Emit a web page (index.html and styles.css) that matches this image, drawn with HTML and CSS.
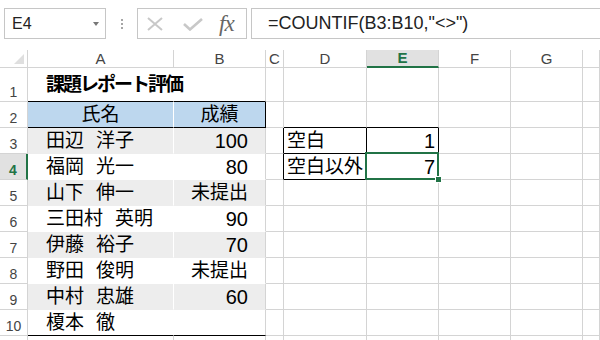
FILE: index.html
```html
<!DOCTYPE html>
<html lang="ja">
<head>
    <meta charset="UTF-8">
    <meta name="viewport" content="width=device-width, initial-scale=1.0">
    <title>課題レポート評価</title>
    <link rel="stylesheet" href="styles.css">
</head>
<body>
    <div class="formula-bar">
        <div class="name-box"><span>E4</span><span class="arrow"></span></div>
        <div class="grip"><i></i><i></i><i></i></div>
        <div class="fx-box">
            <svg class="cancel" width="16" height="14" viewBox="0 0 16 14"><path d="M1 1 L15 13 M15 1 L1 13" stroke="#c8c8c8" stroke-width="2" fill="none"/></svg>
            <svg class="enter" width="20" height="13" viewBox="0 0 20 13"><path d="M1 6 L7 11.5 L19 1" stroke="#c8c8c8" stroke-width="2.6" fill="none"/></svg>
            <span class="fx"><i>f</i><i>x</i></span>
        </div>
        <div class="formula">=COUNTIF(B3:B10,"&lt;&gt;")</div>
    </div>

    <div class="sheet">
        <div class="row head">
            <div class="corner"><svg width="10" height="10" viewBox="0 0 10 10"><path d="M10 0 L10 10 L0 10 Z" fill="#dfdfdf"/></svg></div>
            <div class="ch">A</div>
            <div class="ch">B</div>
            <div class="ch">C</div>
            <div class="ch">D</div>
            <div class="ch active">E</div>
            <div class="ch">F</div>
            <div class="ch">G</div>
            <div class="ch"></div>
        </div>

        <div class="row r1">
            <div class="rh">1</div>
            <div class="cell jp title no-right line-bottom">課題レポート評価</div>
            <div class="cell line-bottom"></div>
            <div class="cell"></div>
            <div class="cell"></div>
            <div class="cell"></div>
            <div class="cell"></div>
            <div class="cell"></div>
            <div class="cell"></div>
        </div>

        <div class="row">
            <div class="rh">2</div>
            <div class="cell jp hdr center white-right line-bottom">氏名</div>
            <div class="cell jp hdr center line-right line-bottom">成績</div>
            <div class="cell"></div>
            <div class="cell line-bottom"></div>
            <div class="cell line-bottom"></div>
            <div class="cell"></div>
            <div class="cell"></div>
            <div class="cell"></div>
        </div>

        <div class="row">
            <div class="rh">3</div>
            <div class="cell jp name gray">田辺<span class="gap">　</span>洋子</div>
            <div class="cell num score gray">100</div>
            <div class="cell line-right"></div>
            <div class="cell jp label line-right line-bottom">空白</div>
            <div class="cell num count line-right line-bottom">1</div>
            <div class="cell"></div>
            <div class="cell"></div>
            <div class="cell"></div>
        </div>

        <div class="row">
            <div class="rh active">4</div>
            <div class="cell jp name white">福岡<span class="gap">　</span>光一</div>
            <div class="cell num score white">80</div>
            <div class="cell line-right"></div>
            <div class="cell jp label line-right line-bottom">空白以外</div>
            <div class="cell num count line-right line-bottom selected">7</div>
            <div class="cell"></div>
            <div class="cell"></div>
            <div class="cell"></div>
        </div>

        <div class="row">
            <div class="rh">5</div>
            <div class="cell jp name gray">山下<span class="gap">　</span>伸一</div>
            <div class="cell jp score gray">未提出</div>
            <div class="cell"></div>
            <div class="cell"></div>
            <div class="cell"></div>
            <div class="cell"></div>
            <div class="cell"></div>
            <div class="cell"></div>
        </div>

        <div class="row">
            <div class="rh">6</div>
            <div class="cell jp name white">三田村<span class="gap">　</span>英明</div>
            <div class="cell num score white">90</div>
            <div class="cell"></div>
            <div class="cell"></div>
            <div class="cell"></div>
            <div class="cell"></div>
            <div class="cell"></div>
            <div class="cell"></div>
        </div>

        <div class="row">
            <div class="rh">7</div>
            <div class="cell jp name gray">伊藤<span class="gap">　</span>裕子</div>
            <div class="cell num score gray">70</div>
            <div class="cell"></div>
            <div class="cell"></div>
            <div class="cell"></div>
            <div class="cell"></div>
            <div class="cell"></div>
            <div class="cell"></div>
        </div>

        <div class="row">
            <div class="rh">8</div>
            <div class="cell jp name white">野田<span class="gap">　</span>俊明</div>
            <div class="cell jp score white">未提出</div>
            <div class="cell"></div>
            <div class="cell"></div>
            <div class="cell"></div>
            <div class="cell"></div>
            <div class="cell"></div>
            <div class="cell"></div>
        </div>

        <div class="row">
            <div class="rh">9</div>
            <div class="cell jp name gray">中村<span class="gap">　</span>忠雄</div>
            <div class="cell num score gray">60</div>
            <div class="cell"></div>
            <div class="cell"></div>
            <div class="cell"></div>
            <div class="cell"></div>
            <div class="cell"></div>
            <div class="cell"></div>
        </div>

        <div class="row">
            <div class="rh">10</div>
            <div class="cell jp name white line-bottom">榎本<span class="gap">　</span>徹</div>
            <div class="cell score white line-bottom"></div>
            <div class="cell"></div>
            <div class="cell"></div>
            <div class="cell"></div>
            <div class="cell"></div>
            <div class="cell"></div>
            <div class="cell"></div>
        </div>

        <div class="row">
            <div class="rh"></div>
            <div class="cell"></div>
            <div class="cell"></div>
            <div class="cell"></div>
            <div class="cell"></div>
            <div class="cell"></div>
            <div class="cell"></div>
            <div class="cell"></div>
            <div class="cell"></div>
        </div>
    </div>
</body>
</html>
```

FILE: styles.css
```css
html, body {
    height: 340px;
    overflow: hidden;
}
body {
    margin: 0;
    background: #fff;
    color: #000;
    font-family: "Liberation Sans", Arial, sans-serif;
}

/* formula bar */
.formula-bar {
    display: flex;
    align-items: flex-start;
    height: 50px;
    padding-top: 8px;
    box-sizing: border-box;
}
.name-box {
    display: flex;
    align-items: center;
    justify-content: space-between;
    width: 102px;
    height: 31px;
    margin-left: 4px;
    padding: 0 6px 0 7px;
    border: 1px solid #c6c6c6;
    box-sizing: border-box;
    font-size: 16px;
    line-height: 18px;
    color: #222;
}
.arrow {
    width: 0;
    height: 0;
    border-left: 3.5px solid transparent;
    border-right: 3.5px solid transparent;
    border-top: 4px solid #777;
}
.grip {
    display: flex;
    flex-direction: column;
    align-items: center;
    gap: 2px;
    width: 31px;
    padding-top: 11px;
}
.grip i {
    width: 2px;
    height: 2px;
    background: #a6a6a6;
}
.fx-box {
    display: flex;
    align-items: center;
    width: 110px;
    height: 31px;
    border: 1px solid #c6c6c6;
    box-sizing: border-box;
}
.cancel {
    margin-left: 9px;
}
.enter {
    margin-left: 20px;
    margin-top: 2px;
}
.fx {
    margin-left: 16px;
    font-family: "Liberation Serif", "Times New Roman", serif;
    font-size: 23px;
    color: #666;
    line-height: 22px;
}
.fx i {
    letter-spacing: -1px;
}
.formula {
    flex: 1;
    height: 31px;
    margin-left: 4px;
    padding-left: 16px;
    border: 1px solid #c6c6c6;
    border-right: none;
    box-sizing: border-box;
    font-size: 18px;
    line-height: 29px;
    color: #222;
    white-space: nowrap;
}

/* sheet grid */
.row {
    display: grid;
    grid-template-columns: 28px 146px 92px 18px 83px 72px 72px 72px 17px;
    height: 26px;
}
.row.head {
    height: 18px;
}
.row.r1 {
    height: 34px;
}
.row > div {
    display: flex;
    align-items: flex-end;
    box-sizing: border-box;
    border-right: 1px solid #d4d4d4;
    border-bottom: 1px solid #d4d4d4;
    white-space: nowrap;
    min-width: 0;
}
.corner {
    justify-content: flex-end;
    padding: 0 3px 3px 0;
}
.ch {
    justify-content: center;
    font-size: 15px;
    line-height: 15px;
    color: #444;
    padding-bottom: 1px;
}
.ch.active {
    background: #e1e1e1;
    border-bottom: 2px solid #217346;
    color: #217346;
    font-weight: bold;
}
.rh {
    justify-content: center;
    font-size: 14px;
    line-height: 14px;
    color: #444;
    padding-bottom: 2px;
}
.rh.active {
    background: #e1e1e1;
    border-right: 2px solid #217346;
    color: #217346;
    font-weight: bold;
}

/* cell contents */
.jp {
    font-family: "Noto Sans CJK JP", sans-serif;
    font-size: 19px;
    line-height: 20px;
    padding-bottom: 4px;
}
.num {
    font-size: 20px;
    line-height: 20px;
    padding-bottom: 2px;
}
.gap {
    font-size: 12px;
}
.title {
    font-weight: bold;
    letter-spacing: -2px;
    padding-left: 18px;
    padding-bottom: 8px;
}
.center {
    justify-content: center;
}
.name {
    padding-left: 18px;
}
.score {
    justify-content: flex-end;
    padding-right: 17px;
}
.label {
    padding-left: 3px;
}
.count {
    justify-content: flex-end;
    padding-right: 3px;
}

/* fills and borders */
.hdr {
    background: #bdd7ee;
}
.gray {
    background: #ededed;
}
.white {
    background: #fff;
}
.row > .name, .row > .score {
    border-bottom-color: transparent;
}
.row > .name {
    border-right-color: #fff;
}
.row > .no-right {
    border-right-color: transparent;
}
.row > .white-right {
    border-right-color: #fff;
}
.row > .line-right {
    border-right-color: #000;
}
.row > .line-bottom {
    border-bottom-color: #000;
}

/* active cell E4 */
.selected {
    position: relative;
}
.selected::before {
    content: "";
    position: absolute;
    left: -2px;
    top: -2px;
    right: -1px;
    bottom: -1px;
    border: 2px solid #217346;
}
.selected::after {
    content: "";
    position: absolute;
    right: -4px;
    bottom: -4px;
    width: 5px;
    height: 5px;
    background: #217346;
    border: 1px solid #fff;
}
```
